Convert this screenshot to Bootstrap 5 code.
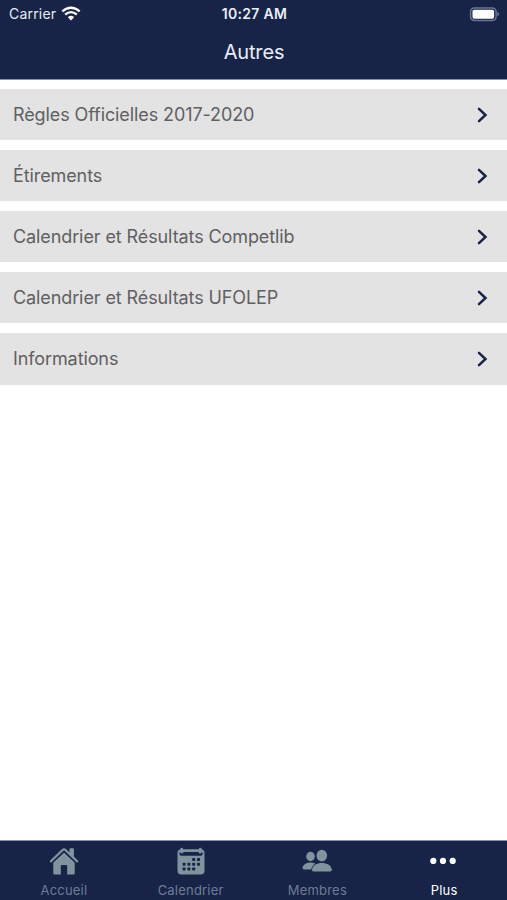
<!DOCTYPE html>
<html lang="fr">
<head>
<meta charset="utf-8">
<meta name="viewport" content="width=device-width, initial-scale=1">
<title>Autres</title>
<link href="https://cdn.jsdelivr.net/npm/bootstrap@5.3.0/dist/css/bootstrap.min.css" rel="stylesheet">
<style>
:root { --navy: #172447; }
body { font-family: Inter, "Liberation Sans", sans-serif; background: #fff; }
.app-header, .tab-bar { background: var(--navy); color: #fff; }
.app-header { height: 79.5px; border-bottom: 1px solid #8294b2; }
.status-row { height: 28px; padding: 0 7px 0 9px; font-size: 14px; line-height: 28px; color: #e9eef8; }
.status-row .carrier { letter-spacing: .2px; }
.status-row .clock { font-weight: 600; letter-spacing: .28px; }
.screen-title { font-size: 20px; line-height: 49px; height: 50px; font-weight: 400; letter-spacing: -.15px; color: #e9eff9; padding-left: 1px; }
.menu-list { gap: 9.8px; padding-top: 9.4px; }
.menu-row { height: 51.3px; padding: 0 19px 0 13px; background: #e3e3e3; color: #606062; font-size: 18px; line-height: 27px; letter-spacing: -.1px; }
.menu-row:hover { color: #606062; }
.tab-bar { height: 60px; border-top: 1px solid #8294b2; }
.tab-item { color: #6d7c94; font-size: 13px; line-height: 16px; padding: 4px 0 0 1px; letter-spacing: .2px; }
.tab-item svg { color: #80949e; margin-bottom: 5px; }
.tab-item.active, .tab-item.active svg { color: #fff; }
</style>
</head>
<body>
<div class="d-flex flex-column vh-100 overflow-hidden">
  <header class="app-header flex-shrink-0">
    <div class="status-row row g-0 align-items-center">
      <div class="col d-flex align-items-center">
        <span class="carrier">Carrier</span>
        <svg width="20" height="16" viewBox="0 0 20 16" fill="none" stroke="#fff" stroke-width="2.3" style="margin-left:5px">
          <path d="M1.300 5.400Q10 -1.900 18.700 5.400M4.200 8.500Q10 3.800 15.800 8.500"/>
          <path d="M6.800 11.200Q10 8.500 13.200 11.200L10 14.400Z" fill="#fff" stroke="none"/>
        </svg>
      </div>
      <div class="col-auto clock">10:27 AM</div>
      <div class="col d-flex justify-content-end align-items-center">
        <svg width="31" height="15" viewBox="0 0 31 15">
          <rect x="1.600" y=".9" width="25.500" height="12.600" rx="3.800" fill="none" stroke="#6d7693" stroke-width="1.500"/>
          <rect x="3.500" y="2.700" width="21.600" height="9" rx="1.600" fill="#fff"/>
          <path d="M28.300 4.900q2 1 2 2.200t-2 2.200z" fill="#6d7693"/>
        </svg>
      </div>
    </div>
    <h1 class="screen-title text-center m-0">Autres</h1>
  </header>

  <main class="menu-list d-flex flex-column flex-grow-1">
    <a class="menu-row d-flex align-items-center justify-content-between text-decoration-none" href="#"><span>Règles Officielles 2017-2020</span><svg width="11" height="16" viewBox="0 0 11 16" fill="none" stroke="#172447" stroke-width="2.500" stroke-linecap="round"><path d="M2 1.800L8.500 8L2 14.200"/></svg></a>
    <a class="menu-row d-flex align-items-center justify-content-between text-decoration-none" href="#"><span>Étirements</span><svg width="11" height="16" viewBox="0 0 11 16" fill="none" stroke="#172447" stroke-width="2.500" stroke-linecap="round"><path d="M2 1.800L8.500 8L2 14.200"/></svg></a>
    <a class="menu-row d-flex align-items-center justify-content-between text-decoration-none" href="#"><span>Calendrier et Résultats Competlib</span><svg width="11" height="16" viewBox="0 0 11 16" fill="none" stroke="#172447" stroke-width="2.500" stroke-linecap="round"><path d="M2 1.800L8.500 8L2 14.200"/></svg></a>
    <a class="menu-row d-flex align-items-center justify-content-between text-decoration-none" href="#"><span>Calendrier et Résultats UFOLEP</span><svg width="11" height="16" viewBox="0 0 11 16" fill="none" stroke="#172447" stroke-width="2.500" stroke-linecap="round"><path d="M2 1.800L8.500 8L2 14.200"/></svg></a>
    <a class="menu-row d-flex align-items-center justify-content-between text-decoration-none" href="#"><span>Informations</span><svg width="11" height="16" viewBox="0 0 11 16" fill="none" stroke="#172447" stroke-width="2.500" stroke-linecap="round"><path d="M2 1.800L8.500 8L2 14.200"/></svg></a>
  </main>

  <nav class="tab-bar row g-0 flex-shrink-0">
    <a class="tab-item col d-flex flex-column align-items-center text-decoration-none" href="#">
      <svg width="32" height="32" viewBox="0 0 32 32" fill="currentColor">
        <path d="M21.500 4q0-.700.700-.700h3q.700 0 .700.700v9.500l-4.400-4z"/>
        <path d="M2.900 16.300L14.600 5q1.400-1.300 2.800 0L29.100 16.300" fill="none" stroke="currentColor" stroke-width="2.300" stroke-linecap="round"/>
        <path d="M5.300 17.500L16 7.400l10.700 10.100V28.300q0 1.200-1.200 1.200H19.200V21q0-1-1-1h-4.400q-1 0-1 1v8.500H6.500q-1.200 0-1.200-1.200z"/>
        <path d="M4.200 17.600L15.200 7.300q.8-.7 1.600 0l11 10.300" fill="none" stroke="#172447" stroke-width="1.100"/>
      </svg>
      <span>Accueil</span>
    </a>
    <a class="tab-item col d-flex flex-column align-items-center text-decoration-none" href="#">
      <svg width="32" height="32" viewBox="0 0 32 32" fill="currentColor">
        <rect x="2.500" y="4.300" width="27" height="25.200" rx="3.800"/>
        <rect x="5.300" y="2.700" width="2.800" height="5" rx="1.400"/>
        <rect x="23.900" y="2.700" width="2.800" height="5" rx="1.400"/>
        <path d="M4.300 8.500q0-1.300 1-1.300.4 1.300 1.600 1.300t1.700-1.500h14.800q.5 1.500 1.700 1.500t1.600-1.300q1 0 1 1.300 0 2.200-2 2.200H6.300q-2 0-2-2.200z" fill="#172447"/>
        <g fill="#172447"><rect x="17.200" y="13" width="3" height="3" rx=".7"/><rect x="22" y="13" width="3" height="3" rx=".7"/><rect x="7.600" y="17.800" width="3" height="3" rx=".7"/><rect x="12.400" y="17.800" width="3" height="3" rx=".7"/><rect x="17.200" y="17.800" width="3" height="3" rx=".7"/><rect x="22" y="17.800" width="3" height="3" rx=".7"/><rect x="7.600" y="22.500" width="3" height="3" rx=".7"/><rect x="12.400" y="22.500" width="3" height="3" rx=".7"/><rect x="17.200" y="22.500" width="3" height="3" rx=".7"/></g>
      </svg>
      <span>Calendrier</span>
    </a>
    <a class="tab-item col d-flex flex-column align-items-center text-decoration-none" href="#">
      <svg width="32" height="32" viewBox="0 0 32 32" fill="currentColor">
        <ellipse cx="9.500" cy="11.500" rx="4.300" ry="4.700"/>
        <path d="M1.500 22.500C2 19.500 5.500 17.400 9.500 17.400q2.800 0 4.600 1Q11.200 20.500 10 24.500H3.200q-1.700 0-1.700-2z"/>
        <ellipse cx="20.800" cy="10.600" rx="5.300" ry="5.900"/>
        <path d="M11 24.300C12 20 15.800 17.900 20.900 17.900s8.900 2.100 9.900 6.400q.3 2.200-1.700 2.200H12.700q-2 0-1.700-2.200z"/>
      </svg>
      <span>Membres</span>
    </a>
    <a class="tab-item active col d-flex flex-column align-items-center text-decoration-none" href="#">
      <svg width="32" height="32" viewBox="0 0 32 32" fill="currentColor"><circle cx="5.300" cy="15.900" r="3.100"/><circle cx="15" cy="15.900" r="3.100"/><circle cx="24.700" cy="15.900" r="3.100"/></svg>
      <span>Plus</span>
    </a>
  </nav>
</div>
<script src="https://cdn.jsdelivr.net/npm/bootstrap@5.3.0/dist/js/bootstrap.bundle.min.js"></script>
</body>
</html>
